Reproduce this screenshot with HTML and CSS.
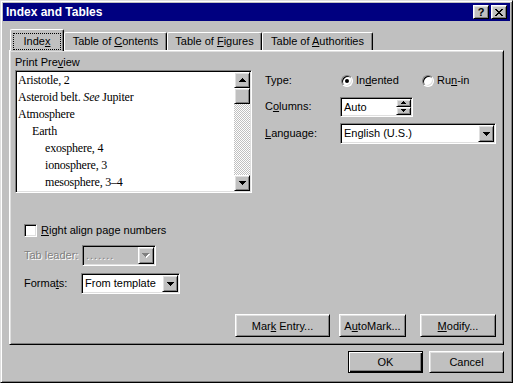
FILE: index.html
```html
<!DOCTYPE html>
<html lang="en">
<head>
    <meta charset="UTF-8">
    <meta name="viewport" content="width=device-width, initial-scale=1.0">
    <title>Index and Tables</title>
    <link rel="stylesheet" href="styles.css">
</head>
<body>

<div class="window">
    <!-- Title bar -->
    <div class="titlebar">
        <span class="title">Index and Tables</span>
        <div class="title-buttons">
            <button class="title-btn">?</button>
            <button class="title-btn">
                <svg width="8" height="7" viewBox="0 0 8 7" shape-rendering="crispEdges"><path fill="#000" d="M0 0h2v1H0z M6 0h2v1H6z M1 1h2v1H1z M5 1h2v1H5z M2 2h4v1H2z M3 3h2v1H3z M2 4h4v1H2z M1 5h2v1H1z M5 5h2v1H5z M0 6h2v1H0z M6 6h2v1H6z"/></svg>
            </button>
        </div>
    </div>

    <div class="content">
        <!-- Tabs -->
        <div class="tabs">
            <div class="tab selected tab-index"><span class="focus"><span>Inde<u>x</u></span></span></div>
            <div class="tab tab-contents"><span>Table of <u>C</u>ontents</span></div>
            <div class="tab tab-figures"><span>Table of <u>F</u>igures</span></div>
            <div class="tab tab-authorities"><span>Table of <u>A</u>uthorities</span></div>
        </div>

        <div class="panel">
            <div class="panel-top">
                <div class="preview">
                    <div class="field-label">Print Pre<u>v</u>iew</div>
                    <div class="listbox">
                        <ul class="entries">
                            <li>Aristotle, 2</li>
                            <li>Asteroid belt. <em>See</em> Jupiter</li>
                            <li>Atmosphere</li>
                            <li class="lvl2">Earth</li>
                            <li class="lvl3">exosphere, 4</li>
                            <li class="lvl3">ionosphere, 3</li>
                            <li class="lvl3">mesosphere, 3–4</li>
                        </ul>
                        <div class="scrollbar">
                            <div class="raised sb-btn">
                                <svg width="7" height="4" viewBox="0 0 7 4" shape-rendering="crispEdges"><path d="M3 0h1v1H3z M2 1h3v1H2z M1 2h5v1H1z M0 3h7v1H0z"/></svg>
                            </div>
                            <div class="raised sb-thumb"></div>
                            <div class="sb-track"></div>
                            <div class="raised sb-btn">
                                <svg width="7" height="4" viewBox="0 0 7 4" shape-rendering="crispEdges"><path d="M0 0h7v1H0z M1 1h5v1H1z M2 2h3v1H2z M3 3h1v1H3z"/></svg>
                            </div>
                        </div>
                    </div>
                </div>

                <div class="options">
                    <div class="option-row">
                        <span class="opt-label">Type:</span>
                        <label class="radio-item first"><span class="radio checked"></span><span>In<u>d</u>ented</span></label>
                        <label class="radio-item"><span class="radio"></span><span>Ru<u>n</u>-in</span></label>
                    </div>
                    <div class="option-row">
                        <span class="opt-label">C<u>o</u>lumns:</span>
                        <div class="sunken spin">
                            <span class="field-text">Auto</span>
                            <div class="spin-btns">
                                <div class="raised spin-btn">
                                    <svg width="5" height="3" viewBox="0 0 5 3" shape-rendering="crispEdges"><path d="M2 0h1v1H2z M1 1h3v1H1z M0 2h5v1H0z"/></svg>
                                </div>
                                <div class="raised spin-btn">
                                    <svg width="5" height="3" viewBox="0 0 5 3" shape-rendering="crispEdges"><path d="M0 0h5v1H0z M1 1h3v1H1z M2 2h1v1H2z"/></svg>
                                </div>
                            </div>
                        </div>
                    </div>
                    <div class="option-row lang-row">
                        <span class="opt-label"><u>L</u>anguage:</span>
                        <div class="sunken combo combo-lang">
                            <span class="field-text">English (U.S.)</span>
                            <div class="raised drop-btn">
                                <svg width="7" height="4" viewBox="0 0 7 4" shape-rendering="crispEdges"><path d="M0 0h7v1H0z M1 1h5v1H1z M2 2h3v1H2z M3 3h1v1H3z"/></svg>
                            </div>
                        </div>
                    </div>
                </div>
            </div>

            <!-- Lower options -->
            <div class="lower">
                <label class="check-row"><span class="sunken checkbox"></span><span><u>R</u>ight align page numbers</span></label>
                <div class="lower-row leader-row">
                    <span class="lower-label disabled">Tab leader:</span>
                    <div class="sunken combo combo-leader is-disabled">
                        <span class="field-text disabled leader-dots">.......</span>
                        <div class="raised drop-btn">
                            <svg width="8" height="5" viewBox="0 0 8 5" shape-rendering="crispEdges"><path fill="#fff" d="M1 1h7v1H1z M2 2h5v1H2z M3 3h3v1H3z M4 4h1v1H4z"/><path fill="#808080" d="M0 0h7v1H0z M1 1h5v1H1z M2 2h3v1H2z M3 3h1v1H3z"/></svg>
                        </div>
                    </div>
                </div>
                <div class="lower-row formats-row">
                    <span class="lower-label">Forma<u>t</u>s:</span>
                    <div class="sunken combo combo-formats">
                        <span class="field-text">From template</span>
                        <div class="raised drop-btn">
                            <svg width="7" height="4" viewBox="0 0 7 4" shape-rendering="crispEdges"><path d="M0 0h7v1H0z M1 1h5v1H1z M2 2h3v1H2z M3 3h1v1H3z"/></svg>
                        </div>
                    </div>
                </div>
            </div>

            <div class="panel-buttons">
                <button class="raised btn btn-mark">Mar<u>k</u> Entry...</button>
                <button class="raised btn btn-auto">A<u>u</u>toMark...</button>
                <button class="raised btn btn-modify"><u>M</u>odify...</button>
            </div>
        </div>

        <div class="dialog-buttons">
            <button class="btn btn-default">OK</button>
            <button class="raised btn">Cancel</button>
        </div>
    </div>
</div>

</body>
</html>
```

FILE: styles.css
```css
/* General styling */
* {
    box-sizing: border-box;
}

body {
    margin: 0;
    background-color: #c0c0c0;
    font-family: "Liberation Sans", Arial, sans-serif;
    font-size: 11px;
    line-height: 13px;
    color: #000;
}

u {
    text-decoration-thickness: 1px;
    text-underline-offset: 1px;
}

button {
    font-family: inherit;
    font-size: 11px;
    color: #000;
    padding: 0;
    margin: 0;
    cursor: default;
}

/* Window frame */
.window {
    width: 513px;
    height: 383px;
    padding: 2px;
    background-color: #c0c0c0;
    border: 1px solid;
    border-color: #dfdfdf #000 #000 #dfdfdf;
    box-shadow: inset 1px 1px #fff, inset -1px -1px #808080;
    display: flex;
    flex-direction: column;
}

.titlebar {
    height: 18px;
    background-color: #000080;
    color: #fff;
    display: flex;
    align-items: center;
    padding: 0 3px;
}

.title {
    flex: 1;
    font-weight: bold;
    font-size: 12px;
}

.title-buttons {
    display: flex;
    gap: 2px;
}

.title-btn {
    width: 16px;
    height: 14px;
    background-color: #c0c0c0;
    border: 1px solid;
    border-color: #fff #000 #000 #fff;
    box-shadow: inset 1px 1px #dfdfdf, inset -1px -1px #808080;
    display: flex;
    align-items: center;
    justify-content: center;
    font-weight: bold;
    font-size: 11px;
    line-height: 1;
}

/* 3D edges */
.raised {
    background-color: #c0c0c0;
    border: 1px solid;
    border-color: #fff #000 #000 #fff;
    box-shadow: inset 1px 1px #dfdfdf, inset -1px -1px #808080;
}

.sunken {
    background-color: #fff;
    border: 1px solid;
    border-color: #808080 #fff #fff #808080;
    box-shadow: inset 1px 1px #000, inset -1px -1px #dfdfdf;
    padding: 1px;
}

/* Tabs */
.tabs {
    display: flex;
    align-items: flex-end;
    height: 21px;
    margin: 8px 0 0 7px;
}

.tab {
    height: 18px;
    background-color: #c0c0c0;
    border: 1px solid;
    border-bottom: 0;
    border-color: #fff #000 #000 #fff;
    border-radius: 2px 2px 0 0;
    box-shadow: inset -1px 0 #808080;
    display: flex;
    align-items: center;
    justify-content: center;
    white-space: nowrap;
}

.tab.selected {
    height: 22px;
    margin-bottom: -1px;
    position: relative;
    z-index: 1;
    align-items: flex-start;
}

.tab-index { width: 54px; }
.tab-contents { width: 103px; }
.tab-figures { width: 95px; }
.tab-authorities { width: 111px; }

.focus {
    width: 48px;
    height: 17px;
    margin-top: 3px;
    border: 1px dotted #000;
    display: flex;
    align-items: center;
    justify-content: center;
}

/* Tab panel */
.panel {
    width: 495px;
    height: 295px;
    margin-left: 6px;
    border: 1px solid;
    border-color: #fff #000 #000 #fff;
    box-shadow: inset 1px 1px #dfdfdf, inset -1px -1px #808080;
    padding: 5px 7px 7px 5px;
    display: flex;
    flex-direction: column;
}

.panel-top {
    display: flex;
}

.preview {
    width: 237px;
}

.field-label {
    height: 13px;
    margin-bottom: 1px;
}

.listbox {
    width: 237px;
    height: 123px;
    background-color: #fff;
    border: 1px solid;
    border-color: #808080 #fff #fff #808080;
    box-shadow: inset 1px 1px #000, inset -1px -1px #dfdfdf;
    padding: 1px;
    display: flex;
}

.entries {
    flex: 1;
    list-style: none;
    margin: 0;
    padding: 0 0 0 1px;
    overflow: hidden;
    font-family: "Liberation Serif", "Times New Roman", serif;
    font-size: 12px;
    line-height: 17px;
    letter-spacing: -0.2px;
    white-space: nowrap;
}

.entries .lvl2 { padding-left: 14px; }
.entries .lvl3 { padding-left: 27px; }

.scrollbar {
    width: 16px;
    display: flex;
    flex-direction: column;
}

.sb-btn {
    height: 16px;
    display: flex;
    align-items: center;
    justify-content: center;
}

.sb-thumb {
    height: 16px;
}

.sb-track {
    flex: 1;
    background: repeating-conic-gradient(#fff 0 25%, #c0c0c0 0 50%) 0 0 / 2px 2px;
}

/* Right hand options */
.options {
    margin-left: 13px;
    padding-top: 14px;
    display: flex;
    flex-direction: column;
    gap: 5px;
}

.option-row {
    display: flex;
    align-items: center;
    height: 21px;
}

.lang-row {
    margin-top: 1px;
}

.opt-label {
    width: 75px;
}

.radio-item {
    display: flex;
    align-items: center;
    gap: 3px;
}

.radio-item.first {
    width: 81px;
    margin-left: 1px;
}

.radio {
    width: 12px;
    height: 12px;
    border-radius: 50%;
    background-color: #fff;
    border: 1px solid;
    border-color: #808080 #fff #fff #808080;
    box-shadow: inset 1px 1px #000, inset -1px -1px #dfdfdf;
    display: flex;
    align-items: center;
    justify-content: center;
}

.radio.checked::after {
    content: "";
    width: 4px;
    height: 4px;
    border-radius: 50%;
    background-color: #000;
}

.field-text {
    flex: 1;
    padding-left: 2px;
    line-height: 17px;
    white-space: nowrap;
    overflow: hidden;
}

.leader-dots {
    letter-spacing: 1px;
}

.spin {
    width: 73px;
    height: 20px;
    display: flex;
}

.spin .field-text {
    line-height: 16px;
}

.spin-btns {
    width: 15px;
    display: flex;
    flex-direction: column;
}

.spin-btn {
    height: 8px;
    display: flex;
    align-items: center;
    justify-content: center;
}

.combo {
    height: 21px;
    display: flex;
}

.combo-lang { width: 156px; }
.combo-leader { width: 74px; margin-left: 1px; }
.combo-formats { width: 99px; }

.combo.is-disabled {
    background-color: #c0c0c0;
}

.drop-btn {
    width: 16px;
    height: 17px;
    display: flex;
    align-items: center;
    justify-content: center;
}

/* Lower options */
.lower {
    margin-top: 29px;
    padding-left: 9px;
    display: flex;
    flex-direction: column;
}

.check-row {
    height: 17px;
    display: flex;
    align-items: center;
    gap: 4px;
}

.checkbox {
    width: 13px;
    height: 13px;
}

.lower-row {
    display: flex;
    align-items: center;
    height: 21px;
}

.leader-row { margin-top: 6px; }
.formats-row { margin-top: 7px; }

.lower-label {
    width: 57px;
}

.disabled {
    color: #808080;
    text-shadow: 1px 1px #fff;
}

/* Buttons */
.panel-buttons {
    margin-top: auto;
    display: flex;
    justify-content: flex-end;
}

.btn {
    height: 23px;
    text-align: center;
}

.btn-mark { width: 95px; }
.btn-auto { width: 67px; margin-left: 9px; }
.btn-modify { width: 76px; margin-left: 14px; }

.dialog-buttons {
    margin-top: 6px;
    padding-right: 6px;
    display: flex;
    justify-content: flex-end;
    gap: 6px;
}

.dialog-buttons .btn {
    width: 75px;
    height: 22px;
}

.btn-default {
    background-color: #c0c0c0;
    border: 1px solid #000;
    box-shadow: inset 1px 1px #fff, inset -1px -1px #000, inset -2px -2px #808080;
}
```
